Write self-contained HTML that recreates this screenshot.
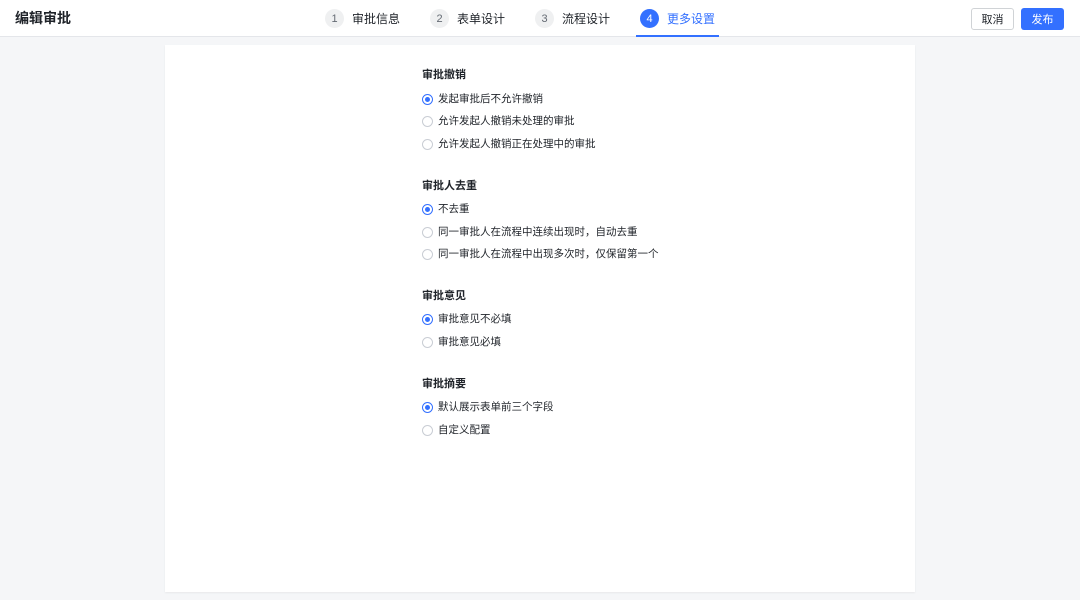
<!DOCTYPE html>
<html><head><meta charset="utf-8"><style>
*{margin:0;padding:0;box-sizing:border-box}
body{width:1080px;height:600px;background:#f5f6f8;font-family:"Liberation Sans","Noto Sans CJK SC",sans-serif;position:relative;overflow:hidden;color:#1f2329}
.hdr{position:absolute;left:0;top:0;width:1080px;height:37px;background:#fff;border-bottom:1px solid #e4e6ea}
.title{position:absolute;left:15px;top:9px;font-size:14px;font-weight:bold;line-height:18px}
.step{position:absolute;top:9px;height:19px;display:flex;align-items:center;font-size:12px;color:#1f2329}
.step .c{width:19px;height:19px;border-radius:50%;background:#eff0f1;color:#646a73;font-size:11px;display:flex;align-items:center;justify-content:center;margin-right:8px}
.step.a{color:#3370ff}.step.a .c{background:#3370ff;color:#fff}
.ul{position:absolute;left:636px;top:35px;width:83px;height:2px;background:#3370ff}
.btn{position:absolute;top:8px;height:22px;width:43px;border-radius:3px;font-size:11px;display:flex;align-items:center;justify-content:center}
.card{position:absolute;left:165px;top:45px;width:750px;height:547px;background:#fff;box-shadow:0 1px 2px rgba(0,0,0,.06)}
.t{position:absolute;left:422px;font-size:11px;font-weight:bold;line-height:14px}
.o{position:absolute;left:422px;font-size:10.5px;line-height:14px;display:flex;align-items:center;color:#1f2329}
.r{width:11px;height:11px;border-radius:50%;border:1px solid #c9cdd4;margin-right:5px;position:relative}
.r.on{border-color:#3370ff}.r.on:after{content:"";position:absolute;left:2px;top:2px;width:5px;height:5px;border-radius:50%;background:#3370ff}
</style></head><body>
<div class="hdr">
<div class="title">编辑审批</div>
<div class="step" style="left:325px"><span class="c">1</span>审批信息</div>
<div class="step" style="left:430px"><span class="c">2</span>表单设计</div>
<div class="step" style="left:535px"><span class="c">3</span>流程设计</div>
<div class="step a" style="left:640px"><span class="c">4</span>更多设置</div>
<div class="ul"></div>
<div class="btn" style="left:971px;border:1px solid #d0d3d6;color:#1f2329">取消</div>
<div class="btn" style="left:1021px;background:#3370ff;color:#fff">发布</div>
</div>
<div class="card"></div>
<div class="t" style="top:68px">审批撤销</div>
<div class="o" style="top:92px"><span class="r on"></span>发起审批后不允许撤销</div>
<div class="o" style="top:114px"><span class="r"></span>允许发起人撤销未处理的审批</div>
<div class="o" style="top:137px"><span class="r"></span>允许发起人撤销正在处理中的审批</div>
<div class="t" style="top:179px">审批人去重</div>
<div class="o" style="top:202px"><span class="r on"></span>不去重</div>
<div class="o" style="top:225px"><span class="r"></span>同一审批人在流程中连续出现时，自动去重</div>
<div class="o" style="top:247px"><span class="r"></span>同一审批人在流程中出现多次时，仅保留第一个</div>
<div class="t" style="top:289px">审批意见</div>
<div class="o" style="top:312px"><span class="r on"></span>审批意见不必填</div>
<div class="o" style="top:335px"><span class="r"></span>审批意见必填</div>
<div class="t" style="top:377px">审批摘要</div>
<div class="o" style="top:400px"><span class="r on"></span>默认展示表单前三个字段</div>
<div class="o" style="top:423px"><span class="r"></span>自定义配置</div>
</body></html>
